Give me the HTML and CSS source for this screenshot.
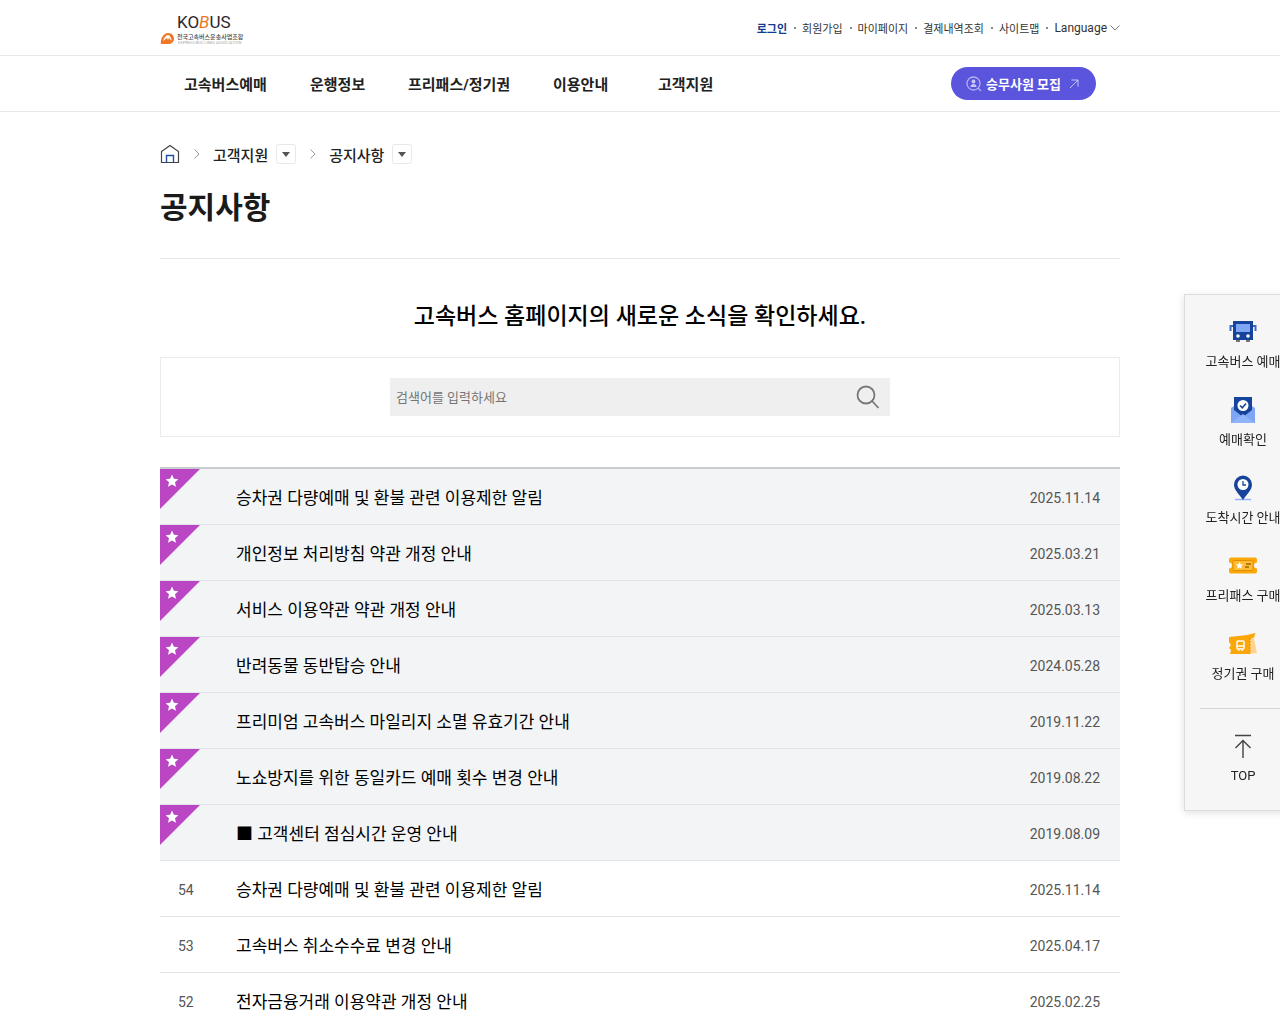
FILE: index.html
```html
<!DOCTYPE html>
<html lang="ko">
<head>
    <meta charset="UTF-8">
    <meta name="viewport" content="width=device-width, initial-scale=1.0">
    <title>공지사항 - KOBUS</title>
    <link rel="stylesheet" href="styles.css">
</head>
<body>
    <!-- shared icons -->
    <svg width="0" height="0" class="sprite" aria-hidden="true">
        <symbol id="ribbon" viewBox="0 0 40 40">
            <path d="M0 0h40L0 40z" fill="#bb46c3"/>
            <path d="M12 5.5l1.9 4.2 4.4.5-3.3 3 1 4.5-4-2.3-4 2.3 1-4.5-3.3-3 4.4-.5z" fill="#fff"/>
        </symbol>
        <symbol id="chevron" viewBox="0 0 8 12">
            <path d="M1.500 1.500l4.500 4.500-4.500 4.500" fill="none" stroke="#999"/>
        </symbol>
        <symbol id="caret" viewBox="0 0 8 5">
            <path d="M0 0h8L4 5z" fill="#555"/>
        </symbol>
    </svg>

    <header>
        <div class="header-top">
            <div class="wrap top-inner">
                <a href="#" class="logo" aria-label="KOBUS">
                    <svg width="86" height="36" viewBox="0 0 86 36">
                        <text x="17" y="18" class="logo-name">KO<tspan class="logo-b">B</tspan>US</text>
                        <path d="M1 34c-1-4 2-11 7-11 4 0 6 3 6 6 0 3-3 5-6 5z" fill="#ef7622"/>
                        <path d="M3 31c1-3 3-6 5-6 2 0 3 3 4 6l-3-3-1 2-1-2z" fill="#fff"/>
                        <text x="17" y="29" class="logo-sub">전국고속버스운송사업조합</text>
                        <text x="18" y="34" class="logo-eng">EXPRESS BUS LINES ASSOCIATION</text>
                    </svg>
                </a>
                <ul class="util">
                    <li><a href="#" class="login">로그인</a></li>
                    <li><a href="#">회원가입</a></li>
                    <li><a href="#">마이페이지</a></li>
                    <li><a href="#">결제내역조회</a></li>
                    <li><a href="#">사이트맵</a></li>
                    <li>
                        <button type="button" class="lang">Language
                            <svg width="10" height="6" viewBox="0 0 10 6"><path d="M.5.5L5 5 9.500.5" fill="none" stroke="#777"/></svg>
                        </button>
                    </li>
                </ul>
            </div>
        </div>
        <nav>
            <div class="wrap nav-inner">
                <ul class="menu">
                    <li><a href="#">고속버스예매</a></li>
                    <li><a href="#">운행정보</a></li>
                    <li><a href="#">프리패스/정기권</a></li>
                    <li><a href="#">이용안내</a></li>
                    <li><a href="#">고객지원</a></li>
                </ul>
                <a href="#" class="recruit">
                    <svg width="16" height="16" viewBox="0 0 16 16">
                        <circle cx="7.500" cy="7.500" r="6.500" fill="none" stroke="#b3b0f3" stroke-width="1.300"/>
                        <circle cx="7.500" cy="5.500" r="1.900" fill="#c9c7f8"/>
                        <path d="M4.500 11c0-4 6-4 6 0z" fill="#c9c7f8"/>
                        <path d="M12 12l3 3" stroke="#b3b0f3" stroke-width="1.300"/>
                    </svg>
                    <span>승무사원 모집</span>
                    <svg width="10" height="10" viewBox="0 0 10 10"><path d="M1 9l8-8M2.500 1H9v6.500" fill="none" stroke="#c9c7f8"/></svg>
                </a>
            </div>
        </nav>
    </header>

    <main class="wrap">
        <div class="location">
            <a href="#" aria-label="홈">
                <svg width="20" height="20" viewBox="0 0 20 20" fill="none">
                    <path d="M1.500 7.500L10 1.500l8.500 6v11h-17z" stroke="#444" stroke-width="1.200"/>
                    <path d="M6.500 18.500v-7h7v7" stroke="#1d4fa5" stroke-width="1.400"/>
                </svg>
            </a>
            <svg class="arrow" width="8" height="12"><use href="#chevron"/></svg>
            <span>고객지원</span>
            <button type="button" class="drop" aria-label="고객지원 메뉴"><svg width="8" height="5"><use href="#caret"/></svg></button>
            <svg class="arrow" width="8" height="12"><use href="#chevron"/></svg>
            <span>공지사항</span>
            <button type="button" class="drop" aria-label="공지사항 메뉴"><svg width="8" height="5"><use href="#caret"/></svg></button>
        </div>
        <h1>공지사항</h1>

        <h2>고속버스 홈페이지의 새로운 소식을 확인하세요.</h2>
        <form class="search-box">
            <div class="search-field">
                <input type="text" aria-label="검색어" placeholder="검색어를 입력하세요">
                <button type="button" aria-label="검색">
                    <svg width="24" height="24" viewBox="0 0 24 24" fill="none" stroke="#777" stroke-width="1.800">
                        <circle cx="10" cy="10" r="8.500"/>
                        <path d="M16 16l6.500 7"/>
                    </svg>
                </button>
            </div>
        </form>

        <table class="board">
            <tbody>
                <tr class="notice"><td class="num"><svg class="ribbon"><use href="#ribbon"/></svg></td><td><a href="#">승차권 다량예매 및 환불 관련 이용제한 알림</a></td><td class="date">2025.11.14</td></tr>
                <tr class="notice"><td class="num"><svg class="ribbon"><use href="#ribbon"/></svg></td><td><a href="#">개인정보 처리방침 약관 개정 안내</a></td><td class="date">2025.03.21</td></tr>
                <tr class="notice"><td class="num"><svg class="ribbon"><use href="#ribbon"/></svg></td><td><a href="#">서비스 이용약관 약관 개정 안내</a></td><td class="date">2025.03.13</td></tr>
                <tr class="notice"><td class="num"><svg class="ribbon"><use href="#ribbon"/></svg></td><td><a href="#">반려동물 동반탑승 안내</a></td><td class="date">2024.05.28</td></tr>
                <tr class="notice"><td class="num"><svg class="ribbon"><use href="#ribbon"/></svg></td><td><a href="#">프리미엄 고속버스 마일리지 소멸 유효기간 안내</a></td><td class="date">2019.11.22</td></tr>
                <tr class="notice"><td class="num"><svg class="ribbon"><use href="#ribbon"/></svg></td><td><a href="#">노쇼방지를 위한 동일카드 예매 횟수 변경 안내</a></td><td class="date">2019.08.22</td></tr>
                <tr class="notice"><td class="num"><svg class="ribbon"><use href="#ribbon"/></svg></td><td><a href="#">■ 고객센터 점심시간 운영 안내</a></td><td class="date">2019.08.09</td></tr>
                <tr><td class="num">54</td><td><a href="#">승차권 다량예매 및 환불 관련 이용제한 알림</a></td><td class="date">2025.11.14</td></tr>
                <tr><td class="num">53</td><td><a href="#">고속버스 취소수수료 변경 안내</a></td><td class="date">2025.04.17</td></tr>
                <tr><td class="num">52</td><td><a href="#">전자금융거래 이용약관 개정 안내</a></td><td class="date">2025.02.25</td></tr>
            </tbody>
        </table>
    </main>

    <!-- Quick menu -->
    <aside class="quick">
        <a href="#">
            <svg width="28" height="28" viewBox="0 0 28 28">
                <path d="M4 3h20v19H4z" fill="#17449b"/>
                <path d="M7 6h14v8H7z" fill="#7ea6f4"/>
                <path d="M4 8H1.500v5M24 8h2.500v5" fill="none" stroke="#3b6bc4" stroke-width="2"/>
                <circle cx="9" cy="18" r="1.800" fill="#fff"/><circle cx="19" cy="18" r="1.800" fill="#fff"/>
                <path d="M7 22h4v2H7zM17 22h4v2h-4z" fill="#777"/>
            </svg>
            <span>고속버스 예매</span>
        </a>
        <a href="#">
            <svg width="28" height="28" viewBox="0 0 28 28">
                <path d="M2 12l12-8 12 8v15H2z" fill="#7ea6f4"/>
                <path d="M5 1h18v13l-9 7-9-7z" fill="#17449b"/>
                <path d="M2 27l12-9 12 9z" fill="#8fb4fa"/>
                <circle cx="14" cy="9.500" r="5.500" fill="#fff"/>
                <path d="M11 9.500l2.300 2.300L17 7.500" fill="none" stroke="#17449b" stroke-width="1.500"/>
            </svg>
            <span>예매확인</span>
        </a>
        <a href="#">
            <svg width="28" height="28" viewBox="0 0 28 28">
                <path d="M6 25.500h16" stroke="#8fb4fa" stroke-width="1.500"/>
                <path d="M14 26C10 20 5 16 5 10.500a9 9 0 0 1 18 0C23 16 18 20 14 26z" fill="#17449b"/>
                <circle cx="14" cy="10.500" r="5.500" fill="#fff"/>
                <path d="M14 7v4h3" fill="none" stroke="#17449b" stroke-width="1.300"/>
            </svg>
            <span>도착시간 안내</span>
        </a>
        <a href="#">
            <svg width="28" height="28" viewBox="0 0 28 28">
                <path d="M2 5.500h24a2 2 0 0 1 2 2v3a2 2 0 0 0 0 6v3a2 2 0 0 1-2 2H2a2 2 0 0 1-2-2v-3a2 2 0 0 0 0-6v-3a2 2 0 0 1 2-2z" fill="#fba70a"/>
                <rect x="4" y="8.500" width="20" height="10" rx="1" fill="#ffbd35" stroke="#e58e00"/>
                <path d="M10.500 10l1.100 2.300 2.500.3-1.900 1.700.5 2.500-2.200-1.300-2.200 1.300.5-2.500-1.900-1.700 2.500-.3z" fill="#fff"/>
                <path d="M17 12h5M16 15h4" stroke="#a56700" stroke-width="1.500"/>
            </svg>
            <span>프리패스 구매</span>
        </a>
        <a href="#">
            <svg width="28" height="28" viewBox="0 0 28 28">
                <path d="M2 8l25-5-2 6 3 14-8 1z" fill="#ffd48d"/>
                <path d="M0 7l19-2 7-2-1 4-4 2v15H1l1-4-2-2 2-3-2-3z" fill="#fba70a"/>
                <path d="M21 8v16" stroke="#e58e00" stroke-dasharray="2 1"/>
                <rect x="8" y="11" width="7" height="8" rx="1" fill="none" stroke="#fff" stroke-width="1.500"/>
                <path d="M8 16h7M9 20h1.500M12.500 20H14" stroke="#fff" stroke-width="1.500"/>
            </svg>
            <span>정기권 구매</span>
        </a>
        <a href="#" class="go-top">
            <svg width="28" height="28" viewBox="0 0 28 28"><path d="M6 3.500h16M14 26V9M6.500 16L14 8.500l7.500 7.500" fill="none" stroke="#444" stroke-width="1.400"/></svg>
            <span>TOP</span>
        </a>
    </aside>
</body>
</html>
```
FILE: styles.css
```css
* {
    box-sizing: border-box;
}

body {
    margin: 0;
    font-family: Roboto, 'Noto Sans CJK KR', sans-serif;
    font-size: 13px;
    color: #222;
    background-color: #fff;
}

a {
    color: inherit;
    text-decoration: none;
}

ul {
    list-style: none;
    margin: 0;
    padding: 0;
}

button {
    font-family: inherit;
    color: inherit;
    background: none;
    border: none;
    padding: 0;
    cursor: pointer;
}

svg {
    display: block;
}

.sprite {
    position: absolute;
}

.wrap {
    width: 100%;
    max-width: 960px;
    margin: 0 auto;
}

/* Header */
.header-top,
nav {
    height: 56px;
    border-bottom: 1px solid #e8e8ec;
}

.top-inner,
.nav-inner {
    display: flex;
    justify-content: space-between;
    align-items: center;
    height: 100%;
}

.logo-name {
    font-family: Roboto, sans-serif;
    font-size: 17px;
    fill: #2b2728;
}

.logo-b {
    fill: #ef7622;
    font-style: italic;
}

.logo-sub {
    font-family: 'Noto Sans CJK KR', sans-serif;
    font-size: 6px;
    font-weight: 500;
    fill: #444;
}

.logo-eng {
    font-size: 4px;
    fill: #aaa;
}

.util {
    display: flex;
    align-items: center;
    font-size: 11px;
    color: #333;
}

.util li {
    display: flex;
    align-items: center;
}

.util li + li::before {
    content: "";
    width: 2px;
    height: 2px;
    margin: 0 6px 0 7px;
    background-color: #888;
}

.util .login {
    color: #143c8c;
    font-weight: 700;
}

.lang {
    display: flex;
    align-items: center;
    gap: 3px;
    font-size: 12px;
}

.nav-inner {
    padding: 0 24px;
}

.menu {
    display: grid;
    grid-template-columns: 126px 98px 145px 105px auto;
    font-size: 15px;
    font-weight: 700;
}

.recruit {
    display: flex;
    align-items: center;
    gap: 4px;
    height: 33px;
    padding: 0 17px 0 15px;
    border-radius: 17px;
    background-color: #5b55de;
    color: #fff;
    font-weight: 700;
}

.recruit span {
    margin-right: 4px;
}

/* Page title */
.location {
    display: flex;
    align-items: center;
    height: 20px;
    margin-top: 32px;
    font-size: 15px;
    font-weight: 500;
}

.arrow {
    margin: 0 12px 0 13px;
}

.drop {
    display: flex;
    align-items: center;
    justify-content: center;
    width: 20px;
    height: 20px;
    margin-left: 8px;
    border: 1px solid #e8e8ec;
    border-radius: 3px;
}

h1 {
    margin: 20px 0 0;
    padding-bottom: 26px;
    border-bottom: 1px solid #e5e5e5;
    font-size: 30px;
    line-height: 48px;
    font-weight: 700;
    color: #1a1a1a;
}

h2 {
    margin: 40px 0 22px;
    font-size: 23px;
    line-height: 36px;
    font-weight: 500;
    text-align: center;
    color: #000;
}

.search-box {
    display: flex;
    justify-content: center;
    padding: 20px;
    border: 1px solid #ebebeb;
}

.search-field {
    display: flex;
    width: 500px;
    height: 38px;
    background-color: #efefef;
}

.search-field input {
    flex: 1;
    min-width: 0;
    padding: 0 6px;
    border: none;
    background: none;
    font-family: inherit;
    font-size: 13px;
}

.search-field input::placeholder {
    color: #757575;
}

.search-field button {
    padding: 0 10px;
}

/* Notice list */
.board {
    width: 100%;
    margin-top: 30px;
    border-spacing: 0;
    border-top: 2px solid #c8cccc;
    font-size: 17px;
    color: #000;
}

.board td {
    height: 56px;
    padding: 0;
    border-bottom: 1px solid #e1e3e6;
}

.board .notice td {
    background-color: #f2f4f6;
}

.board .num {
    position: relative;
    width: 76px;
    padding: 2px 0 0 18px;
    font-size: 14px;
    color: #555;
}

.board .date {
    width: 120px;
    padding: 2px 20px 0 0;
    text-align: right;
    font-size: 14px;
    color: #555;
}

.ribbon {
    position: absolute;
    top: 0;
    left: 0;
    width: 40px;
    height: 40px;
}

/* Quick menu */
.quick {
    position: fixed;
    top: 294px;
    right: -22px;
    width: 118px;
    padding: 23px 15px 24px;
    border: 1px solid #ddd;
    background-color: #f6f6f6;
    box-shadow: 0 2px 8px rgba(0, 0, 0, 0.12);
}

.quick a {
    display: flex;
    flex-direction: column;
    align-items: center;
    gap: 6px;
    margin-bottom: 24px;
    line-height: 20px;
    white-space: nowrap;
}

.quick .go-top {
    margin-bottom: 0;
    padding-top: 23px;
    border-top: 1px solid #d5d5d5;
}
```
